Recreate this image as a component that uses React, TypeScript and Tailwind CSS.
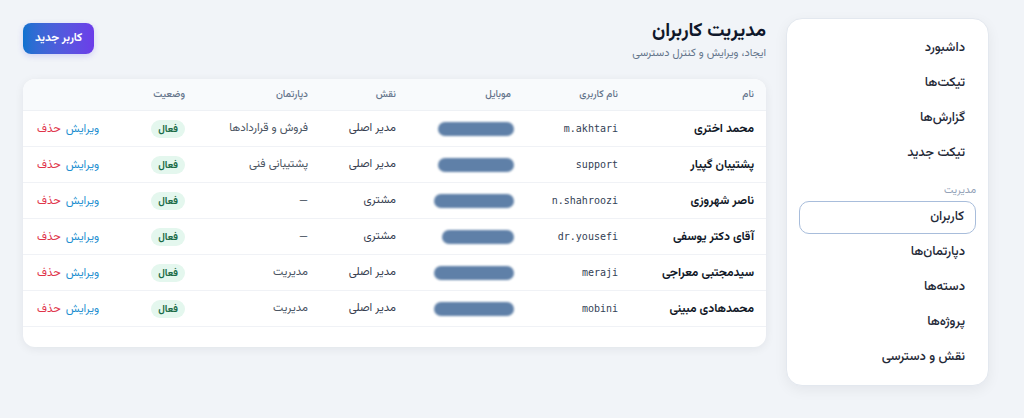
const sideLinks = ['داشبورد', 'تیکت‌ها', 'گزارش‌ها', 'تیکت جدید'];
const adminLinks = ['کاربران', 'دپارتمان‌ها', 'دسته‌ها', 'پروژه‌ها', 'نقش و دسترسی'];

type User = {
  name: string;
  username: string;
  role: string;
  dept: string;
  phoneW: number;
};

const users: User[] = [
  { name: 'محمد اختری', username: 'm.akhtari', role: 'مدیر اصلی', dept: 'فروش و قراردادها', phoneW: 76 },
  { name: 'پشتیبان گپیار', username: 'support', role: 'مدیر اصلی', dept: 'پشتیبانی فنی', phoneW: 76 },
  { name: 'ناصر شهروزی', username: 'n.shahroozi', role: 'مشتری', dept: '—', phoneW: 80 },
  { name: 'آقای دکتر یوسفی', username: 'dr.yousefi', role: 'مشتری', dept: '—', phoneW: 72 },
  { name: 'سیدمجتبی معراجی', username: 'meraji', role: 'مدیر اصلی', dept: 'مدیریت', phoneW: 80 },
  { name: 'محمدهادی مبینی', username: 'mobini', role: 'مدیر اصلی', dept: 'مدیریت', phoneW: 80 },
];

function Sidebar() {
  return (
    <aside className="w-[203px] shrink-0 rounded-2xl border border-[#e3e8ef] bg-white px-3 pt-[12px] pb-[10px] shadow-[0_4px_14px_rgba(15,23,42,0.06)]">
      <nav className="flex flex-col">
        {sideLinks.map((l) => (
          <a key={l} className="flex h-[35px] items-center px-[11px] text-[13px] font-medium text-[#1f2937]">
            {l}
          </a>
        ))}
      </nav>
      <div className="mt-[12px] mb-[2px] text-[10.5px] text-[#94a3b8]">مدیریت</div>
      <nav className="flex flex-col">
        {adminLinks.map((l, i) => (
          <a
            key={l}
            className={
              i === 0
                ? 'mb-[1px] flex h-[33px] items-center rounded-[10px] border border-[#a8bddb] px-[11px] text-[13px] font-medium text-[#1f2937]'
                : 'flex h-[35px] items-center px-[11px] text-[13px] font-medium text-[#1f2937]'
            }
          >
            {l}
          </a>
        ))}
      </nav>
    </aside>
  );
}

function UsersTable() {
  return (
    <div className="overflow-hidden rounded-xl bg-white pb-[20px] shadow-[0_2px_10px_rgba(15,23,42,0.07)]">
      <table className="w-full table-fixed border-collapse text-right">
        <thead>
          <tr className="h-[32px] border-b border-[#eef1f5] bg-[#f8fafc] text-[10px] text-[#64748b]">
            <th className="w-[148px] pr-[12px] font-medium">نام</th>
            <th className="w-[104px] font-medium">نام کاربری</th>
            <th className="w-[118px] font-medium">
              <span className="mr-[3px]">موبایل</span>
            </th>
            <th className="w-[88px] font-medium">نقش</th>
            <th className="w-[123px] font-medium">دپارتمان</th>
            <th className="w-[80px] font-medium">وضعیت</th>
            <th className="font-medium"></th>
          </tr>
        </thead>
        <tbody>
          {users.map((u) => (
            <tr key={u.username} className="h-[36px] border-b border-[#f0f2f6]">
              <td className="pr-[12px] text-[12px] font-bold text-[#111827]">{u.name}</td>
              <td className="font-['DejaVu_Sans_Mono',monospace] text-[10px] text-[#334155]">{u.username}</td>
              <td>
                {/* masked phone number */}
                <div
                  className="h-[14px] rounded-full bg-[#5f80a8] blur-[1.2px]"
                  style={{ width: u.phoneW }}
                />
              </td>
              <td className="text-[11.5px] text-[#374151]">{u.role}</td>
              <td className="text-[11.5px] text-[#4b5563]">{u.dept}</td>
              <td>
                <span className="inline-flex h-[18px] items-center rounded-full bg-[#e4f7ee] px-[7px] text-[10px] font-bold text-[#1b6b47]">
                  فعال
                </span>
              </td>
              <td className="pl-[14px] text-left">
                <div className="inline-flex items-center gap-[5px] text-[11.5px]">
                  <button className="text-[#1d8fd0]">ویرایش</button>
                  <button className="text-[#e0344a]">حذف</button>
                </div>
              </td>
            </tr>
          ))}
        </tbody>
      </table>
    </div>
  );
}

export default function App() {
  return (
    <div
      dir="rtl"
      className="flex h-[418px] w-[1024px] items-start gap-[20px] bg-[#f1f4f8] pt-[18px] pr-[35px] pl-[23px] font-['Vazirmatn',sans-serif]"
    >
      <Sidebar />
      <main className="flex flex-1 flex-col">
        <div className="flex items-start justify-between">
          <div>
            <h1 className="text-[19px] font-bold leading-[28px] text-[#0f172a]">مدیریت کاربران</h1>
            <p className="text-[11px] text-[#64748b]">ایجاد، ویرایش و کنترل دسترسی</p>
          </div>
          <button className="mt-[5px] h-[31px] rounded-lg bg-gradient-to-r from-[#0d72cf] to-[#6c3ce9] px-[12px] text-[11.5px] font-bold text-white shadow-[0_2px_6px_rgba(79,70,229,0.2)]">
            کاربر جدید
          </button>
        </div>
        <div className="mt-[16px]">
          <UsersTable />
        </div>
      </main>
    </div>
  );
}
